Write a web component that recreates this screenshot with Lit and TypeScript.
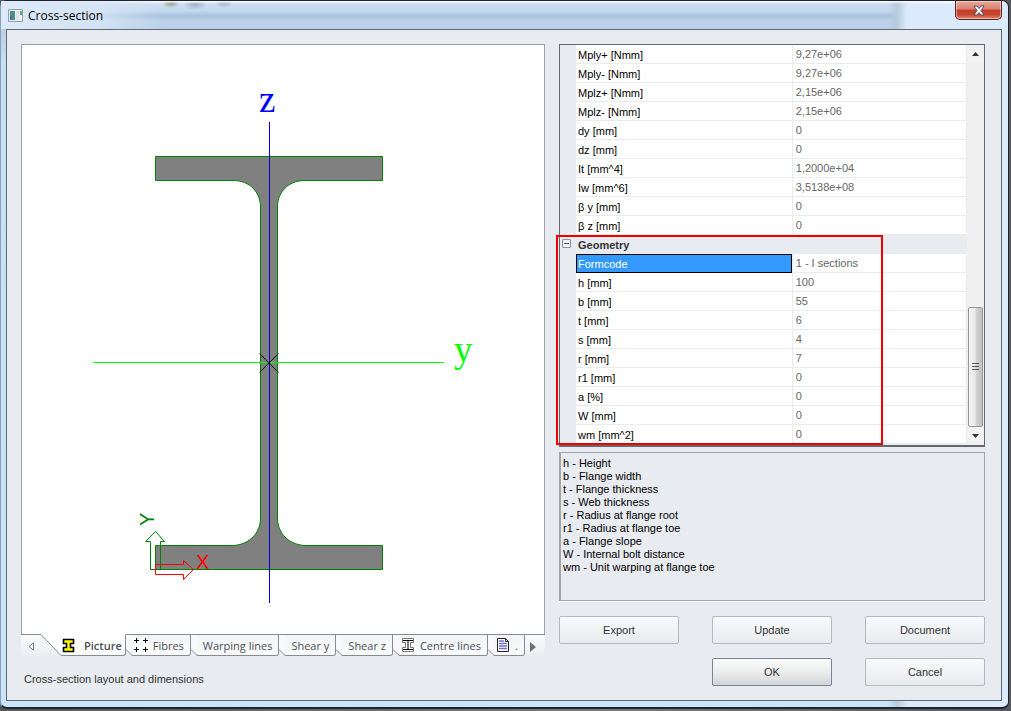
import { LitElement, html, css, svg, nothing } from "lit";
import { customElement, property, state } from "lit/decorators.js";
import { classMap } from "lit/directives/class-map.js";

interface Row {
  name: string;
  value: string;
}

const RESULTS: Row[] = [
  { name: "Mply+ [Nmm]", value: "9,27e+06" },
  { name: "Mply- [Nmm]", value: "9,27e+06" },
  { name: "Mplz+ [Nmm]", value: "2,15e+06" },
  { name: "Mplz- [Nmm]", value: "2,15e+06" },
  { name: "dy [mm]", value: "0" },
  { name: "dz [mm]", value: "0" },
  { name: "It [mm^4]", value: "1,2000e+04" },
  { name: "Iw [mm^6]", value: "3,5138e+08" },
  { name: "β y [mm]", value: "0" },
  { name: "β z [mm]", value: "0" },
];

const GEOMETRY: Row[] = [
  { name: "Formcode", value: "1 - I sections" },
  { name: "h [mm]", value: "100" },
  { name: "b [mm]", value: "55" },
  { name: "t [mm]", value: "6" },
  { name: "s [mm]", value: "4" },
  { name: "r [mm]", value: "7" },
  { name: "r1 [mm]", value: "0" },
  { name: "a [%]", value: "0" },
  { name: "W [mm]", value: "0" },
  { name: "wm [mm^2]", value: "0" },
];

const LEGEND = [
  "h - Height",
  "b - Flange width",
  "t - Flange thickness",
  "s - Web thickness",
  "r - Radius at flange root",
  "r1 - Radius at flange toe",
  "a - Flange slope",
  "W - Internal bolt distance",
  "wm - Unit warping at flange toe",
];

const ICONS: Record<string, unknown> = {
  beam: svg`<path d="M1.5 2.5h10v4h-3v4h3v4h-10v-4h3v-4h-3z" fill="#ff0" stroke="#000" stroke-width="1.600"/>`,
  fibres: svg`<path d="M0 0h16v16H0z" fill="#fff"/><path d="M1 3.5h5M3.5 1v5M10 3.5h5M12.5 1v5M1 12.5h5M3.5 10v5M10 12.5h5M12.5 10v5" stroke="#000"/>`,
  centre: svg`<path d="M0 0h16v16H0z" fill="#fff"/><path d="M2.5 1.5h11v4h-3v5h3v4h-11v-4h3v-5h-3z" fill="#fff" stroke="#777"/><path d="M3 3.5h10M3 12.5h10M8 3.5v9" stroke="#000"/>`,
  report: svg`<path d="M2.5 1.5h8l3 3v10h-11z" fill="#fff" stroke="#222"/><path d="M10.5 1.5v3h3" fill="none" stroke="#222"/><path d="M4 4h5M4 6.500h8M4 9h8M4 11.500h8" stroke="#7272c4" stroke-width="1.5"/>`,
};

@customElement("section-drawing")
class SectionDrawing extends LitElement {
  static styles = css`
    :host { display: block; background: #fff; }
    .drawing { display: block; width: 100%; height: 100%; }
    .axis-label { font-family: "Liberation Serif", serif; font-size: 37px; }
    .origin-label { font-family: "Liberation Sans", sans-serif; font-size: 20px; }
  `;

  render() {
    return html`
      <svg class="drawing" viewBox="22 45 522 589" role="img" aria-label="I section with axes">
        <path
          d="M155.500 156.500H382.500V180.500H304C288 181 278 192 277.500 206V519C278 533 288 544 304 545.500H382.500V569.500H155.500V545.500H234C250 544 260 533 260.500 519V206C260 192 250 181 234 180.500H155.500Z"
          fill="#808080" stroke="#008000" />
        <path d="M269.500 122V603" stroke="#0000d0" />
        <path d="M93 362.500H444" stroke="#0f0" />
        <path d="M259.500 353.500L278.500 372.500M278.500 353.500L259.500 372.500" stroke="#000" />
        <path d="M150.500 569.500V541.500H145.500L155.500 531.500L164.500 541.500H160.500V569.500Z" fill="none" stroke="#008000" />
        <path d="M155.500 564.500H183.500V560.500L193.500 569.500L183.500 579.500V574.500H155.500Z" fill="none" stroke="#f00" />
        <text class="axis-label" x="259" y="112" fill="#00f">z</text>
        <text class="axis-label" x="454" y="362" fill="#0f0">y</text>
        <text class="origin-label" x="196" y="569" fill="#f00">X</text>
        <text class="origin-label" transform="translate(154 526) rotate(-90)" fill="#008000">Y</text>
      </svg>
    `;
  }
}

@customElement("view-tabs")
class ViewTabs extends LitElement {
  @state() private active = "Picture";

  private tabs = [
    { label: "Picture", icon: "beam" },
    { label: "Fibres", icon: "fibres" },
    { label: "Warping lines", icon: "" },
    { label: "Shear y", icon: "" },
    { label: "Shear z", icon: "" },
    { label: "Centre lines", icon: "centre" },
    { label: ".", icon: "report" },
  ];

  static styles = css`
    :host { display: block; }
    .strip { display: flex; height: 24px; background: linear-gradient(#fdfdfe, #e8ebf0); }
    button {
      box-sizing: border-box;
      margin: 0;
      padding: 0;
      border: 0;
      background: none;
      font: 11px "Open Sans", "Noto Sans", sans-serif;
      color: #4a4f57;
    }
    .scroll { width: 20px; border-top: 1px solid #868b93; display: flex; align-items: center; justify-content: center; }
    .next { flex: 1; justify-content: flex-start; padding-left: 5px; }
    .tab { display: flex; height: 22px; }
    .edge { flex: none; width: 7px; height: 22px; }
    .tab.active .edge { width: 21px; }
    .face {
      box-sizing: border-box;
      display: flex;
      align-items: center;
      gap: 4px;
      height: 22px;
      padding: 0 6px 0 0;
      white-space: nowrap;
      border: solid #868b93;
      border-width: 1px 1px 1px 0;
      border-bottom-right-radius: 3px;
      background: linear-gradient(#f1f3f6, #fcfcfd);
    }
    .plain .face { padding-left: 5px; }
    .active .face { border-top-color: #fff; background: #fff; font-weight: 600; gap: 6px; padding-right: 3px; }
    .icon { flex: none; width: 16px; height: 16px; }
  `;

  render() {
    return html`
      <div class="strip" role="tablist">
        <button class="scroll" aria-label="Previous tabs">
          <svg width="6" height="9"><path d="M5.500 .8V8.200L1 4.500Z" fill="#fff" stroke="#777" /></svg>
        </button>
        ${this.tabs.map((tab) => {
          const active = tab.label === this.active;
          return html`
            <button
              role="tab"
              aria-selected=${active}
              class=${classMap({ tab: true, active, plain: !tab.icon })}
              @click=${() => (this.active = tab.label)}>
              ${active
                ? html`<svg class="edge"><path d="M0 0H21V21.500Q19 21.500 18 19.500Z" fill="#fff" /><path d="M0 .5L18 19.500Q19.500 21.500 21 21.500" fill="none" stroke="#868b93" /></svg>`
                : html`<svg class="edge"><path d="M0 0H7V21L0 15Z" fill="#f8f9fb" /><path d="M0 .5H7M0 15.500L5 20.500Q6 21.500 7 21.500" fill="none" stroke="#868b93" /></svg>`}
              <span class="face">
                ${tab.icon ? html`<svg class="icon" viewBox="0 0 16 16">${ICONS[tab.icon]}</svg>` : nothing}
                <span>${tab.label}</span>
              </span>
            </button>
          `;
        })}
        <button class="scroll next" aria-label="Next tabs">
          <svg width="6" height="10"><path d="M0 0L6 5L0 10Z" fill="#6e6e6e" /></svg>
        </button>
      </div>
    `;
  }
}

@customElement("property-grid")
class PropertyGrid extends LitElement {
  @property({ attribute: false }) selected = "Formcode";
  @state() private open = true;

  static styles = css`
    :host { display: block; position: relative; }
    .panel {
      display: flex;
      border: 1px solid #65686c;
      border-bottom-width: 2px;
      background: #e8ebf0;
      padding-bottom: 1px;
    }
    table { flex: 1; border-collapse: separate; border-spacing: 0; table-layout: fixed; min-width: 0; }
    .gutter-col { width: 16px; }
    .name-col { width: 53%; }
    tr { height: 19px; }
    td, th {
      box-sizing: border-box;
      height: 19px;
      padding: 0 2px;
      font-weight: 400;
      text-align: left;
      line-height: 16px;
      white-space: nowrap;
      border-bottom: 1px solid #e8ebf0;
      background: #fff;
      color: #000;
    }
    th { padding-top: 2px; }
    td { padding-left: 3px; border-left: 1px solid #e8ebf0; border-right: 1px solid #e8ebf0; color: #666; }
    .gutter { background: #e8ebf0; border: 0; padding: 0; vertical-align: top; }
    .group { background: #e8ebf0; font-weight: 700; color: #333; }
    .selected { background: #3399ff; color: #fff; border: 1px solid #000; padding: 0 1px; }
    .toggle {
      display: flex;
      align-items: center;
      justify-content: center;
      box-sizing: border-box;
      width: 9px;
      height: 9px;
      margin: 4px 0 0 2px;
      padding: 0;
      border: 1px solid #919191;
      border-radius: 1px;
      background: #f4f4f4;
    }
    .bar { display: flex; flex-direction: column; width: 17px; background: #f0f0f0; }
    .arrow { display: flex; align-items: center; justify-content: center; height: 17px; border: 0; padding: 0; background: #f2f2f2; }
    .track { flex: 1; display: flex; flex-direction: column; justify-content: flex-end; padding: 0 1px; }
    .thumb {
      box-sizing: border-box;
      height: 33%;
      display: flex;
      align-items: center;
      justify-content: center;
      padding: 0;
      border: 1px solid #979797;
      border-radius: 2px;
      background: linear-gradient(90deg, #f5f5f5, #e9e9eb 45%, #d0d0d3 60%, #c0c0c4);
    }
    .highlight {
      position: absolute;
      left: -3px;
      right: 102px;
      bottom: 2px;
      height: 206px;
      border: 2px solid #f00000;
      pointer-events: none;
    }
  `;

  private row(r: Row) {
    return html`
      <tr>
        <td class="gutter"></td>
        <th scope="row" class=${classMap({ selected: r.name === this.selected })} @click=${() => (this.selected = r.name)}>${r.name}</th>
        <td>${r.value}</td>
      </tr>
    `;
  }

  render() {
    return html`
      <div class="panel">
        <table>
          <colgroup><col class="gutter-col" /><col class="name-col" /><col /></colgroup>
          <tbody>${RESULTS.map((r) => this.row(r))}</tbody>
          <tbody>
            <tr>
              <td class="gutter">
                <button class="toggle" aria-label="Toggle Geometry" aria-expanded=${this.open} @click=${() => (this.open = !this.open)}>
                  <svg width="5" height="5"><path d="M0 2.500H5" stroke="#3b5a9a" /></svg>
                </button>
              </td>
              <th class="group" scope="colgroup" colspan="2">Geometry</th>
            </tr>
            ${this.open ? GEOMETRY.map((r) => this.row(r)) : nothing}
          </tbody>
        </table>
        <div class="bar">
          <button class="arrow" aria-label="Scroll up"><svg width="7" height="4"><path d="M0 4L3.500 0L7 4Z" fill="#333" /></svg></button>
          <div class="track">
            <button class="thumb" aria-label="Scroll position">
              <svg width="7" height="8"><path d="M0 .5H7M0 3.500H7M0 6.500H7" stroke="#555" /></svg>
            </button>
          </div>
          <button class="arrow" aria-label="Scroll down"><svg width="7" height="4"><path d="M0 0L3.500 4L7 0Z" fill="#333" /></svg></button>
        </div>
      </div>
      <div class="highlight"></div>
    `;
  }
}

@customElement("app-root")
class AppRoot extends LitElement {
  static styles = css`
    :host {
      display: block;
      box-sizing: border-box;
      min-height: 100vh;
      padding: 0 2px 3px 0;
      background: linear-gradient(90deg, #55585d, #777b80 60%, #55585d);
      font: 11px "Liberation Sans", Arial, sans-serif;
      color: #222;
    }
    .window {
      box-sizing: border-box;
      display: flex;
      flex-direction: column;
      min-height: calc(100vh - 3px);
      border: 1px solid #20242a;
      border-left-color: #8ba0b5;
      border-bottom-width: 2px;
      border-radius: 7px;
      padding: 0 6px 6px 5px;
      background:
        linear-gradient(#fff, #ffffff00 3px),
        radial-gradient(ellipse 9px 5px at 170px 2px, #7d8550c0, #7d855000),
        radial-gradient(ellipse 12px 6px at 194px 3px, #7288a590, #7288a500),
        radial-gradient(ellipse 9px 5px at 223px 2px, #7288a590, #7288a500),
        linear-gradient(90deg, #dcebfb00 0 88%, #b8cbdd 89%, #dcebfb 90%),
        linear-gradient(#d0e0f2 0, #c4d8ee 10px, #a9c1dd 15px, #bcd3ea 20px, #b9d0e8 28px, #c6def6 60px, #cbe3fb);
    }
    .titlebar { display: flex; align-items: flex-start; height: 28px; }
    .glow { display: flex; align-items: center; gap: 5px; height: 28px; margin-left: -5px; padding: 0 60px 0 7px; background: linear-gradient(90deg, #dceafa, #d8e7f7cc 60%, #d8e7f700); }
    .title { margin: 0; font: 12px "Open Sans", "Noto Sans", sans-serif; color: #000; }
    .close {
      display: flex;
      align-items: center;
      justify-content: center;
      box-sizing: border-box;
      width: 47px;
      height: 19px;
      margin-left: auto;
      padding: 0;
      border: 1px solid #5a2526;
      border-top: 0;
      border-radius: 0 0 5px 5px;
      box-shadow: inset 0 0 0 1px #ffffff70;
      background: linear-gradient(#e9a99c, #d9806f 45%, #c03f2a 50%, #c8452f 75%, #e08a6d);
    }
    .client {
      flex: 1;
      display: grid;
      grid-template-columns: minmax(0, 524fr) minmax(0, 426fr);
      gap: 14px;
      padding: 14px 16px 14px 14px;
      border: 1px solid #5f6a75;
      background: #e8ebf0;
    }
    .left { display: flex; flex-direction: column; }
    .canvas { flex: 1; border: 1px solid #9ba1a9; border-bottom: 0; }
    .status { margin: 0; padding: 13px 3px 0; height: 15px; line-height: 16px; color: #333; }
    .right { display: flex; flex-direction: column; }
    .legend {
      box-sizing: border-box;
      flex: 1;
      margin: 5px 0 15px;
      padding: 4px 2px;
      list-style: none;
      line-height: 13px;
      color: #000;
      border: 1px solid #a2a5aa;
      border-left-width: 2px;
      box-shadow: 0 1px #fff;
    }
    .actions { display: grid; grid-template-columns: repeat(3, 120px); justify-content: space-between; row-gap: 14px; }
    .action {
      box-sizing: border-box;
      height: 28px;
      padding: 0;
      border: 1px solid #b4b9be;
      border-radius: 2px;
      background: linear-gradient(#f9fafc, #e8ebee);
      font: inherit;
      color: #333;
    }
    .ok { grid-column: 2; border-color: #7c8494; background: linear-gradient(#fcfcfc, #eceded 50%, #d2d5d8); }
  `;

  render() {
    return html`
      <div class="window">
        <header class="titlebar">
          <div class="glow">
            <svg width="15" height="13">
              <path d="M.5 .5H14.500V12.500H.5Z" fill="#eef1f3" stroke="#93a0ab" />
              <path d="M2 2H7V11H2Z" fill="#4c8f8a" /><path d="M2 7H4V11H2Z" fill="#3f6fa8" />
              <path d="M8 2H11V11H8Z" fill="#dfe3e6" /><path d="M12 2H14V6H12Z" fill="#5fa88c" />
            </svg>
            <h1 class="title">Cross-section</h1>
          </div>
          <button class="close" aria-label="Close">
            <svg width="12" height="11"><path d="M1 1H4L6 3.500L8 1H11L8 5.500L11 10H8L6 7.500L4 10H1L4 5.500Z" fill="#fff" stroke="#4c4f66" /></svg>
          </button>
        </header>
        <main class="client">
          <section class="left">
            <section-drawing class="canvas"></section-drawing>
            <view-tabs></view-tabs>
            <p class="status">Cross-section layout and dimensions</p>
          </section>
          <section class="right">
            <property-grid></property-grid>
            <ul class="legend">${LEGEND.map((line) => html`<li>${line}</li>`)}</ul>
            <div class="actions">
              <button class="action">Export</button>
              <button class="action">Update</button>
              <button class="action">Document</button>
              <button class="action ok">OK</button>
              <button class="action">Cancel</button>
            </div>
          </section>
        </main>
      </div>
    `;
  }
}
